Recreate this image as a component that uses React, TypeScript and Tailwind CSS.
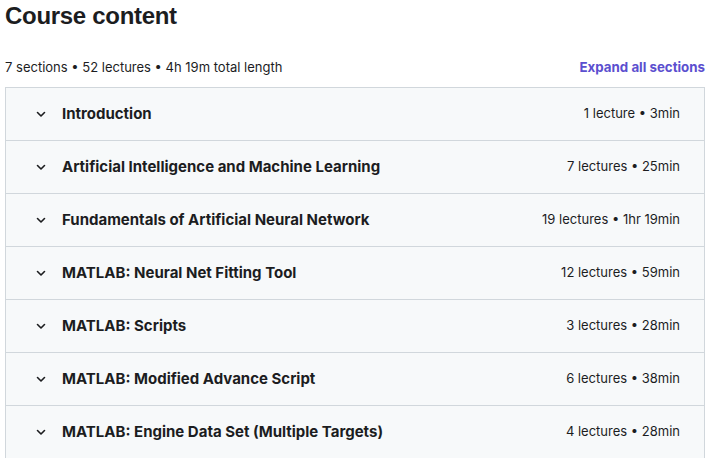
import { FC } from 'react';

const sections = [
  { title: 'Introduction', meta: '1 lecture • 3min' },
  { title: 'Artificial Intelligence and Machine Learning', meta: '7 lectures • 25min' },
  { title: 'Fundamentals of Artificial Neural Network', meta: '19 lectures • 1hr 19min' },
  { title: 'MATLAB: Neural Net Fitting Tool', meta: '12 lectures • 59min' },
  { title: 'MATLAB: Scripts', meta: '3 lectures • 28min' },
  { title: 'MATLAB: Modified Advance Script', meta: '6 lectures • 38min' },
  { title: 'MATLAB: Engine Data Set (Multiple Targets)', meta: '4 lectures • 28min' },
];

const Chevron: FC = () => (
  <svg width="12" height="12" viewBox="0 0 12 12" fill="none" className="shrink-0">
    <path d="M2.5 4.5 6 8l3.5-3.5" stroke="#1c1d1f" strokeWidth="1.6" strokeLinecap="round" strokeLinejoin="round" />
  </svg>
);

const App: FC = () => {
  return (
    <div className="w-[711px] h-[458px] overflow-hidden bg-white text-[#1c1d1f] font-['Inter',sans-serif] pl-[5px] pr-[6px]">
      <h2 className="font-['Liberation_Sans',sans-serif] text-[24px] leading-[32px] font-bold tracking-[-0.3px]">Course content</h2>
      <div className="flex items-end justify-between mt-[25px] mb-[10px]">
        <span className="text-[13px] leading-[20px]">7 sections • 52 lectures • 4h 19m total length</span>
        <button className="text-[13.3px] leading-[20px] font-bold text-[#5b4fcf]">Expand all sections</button>
      </div>
      <div className="border border-[#d1d7dc] border-b-0">
        {sections.map((s) => (
          <div
            key={s.title}
            className="flex items-center justify-between h-[53px] bg-[#f7f9fa] border-b border-[#d1d7dc] pl-[29px] pr-[24px]"
          >
            <div className="flex items-center gap-[15px]">
              <Chevron />
              <span className="text-[15px] font-bold">{s.title}</span>
            </div>
            <span className="text-[13px]">{s.meta}</span>
          </div>
        ))}
      </div>
    </div>
  );
};

export default App;
